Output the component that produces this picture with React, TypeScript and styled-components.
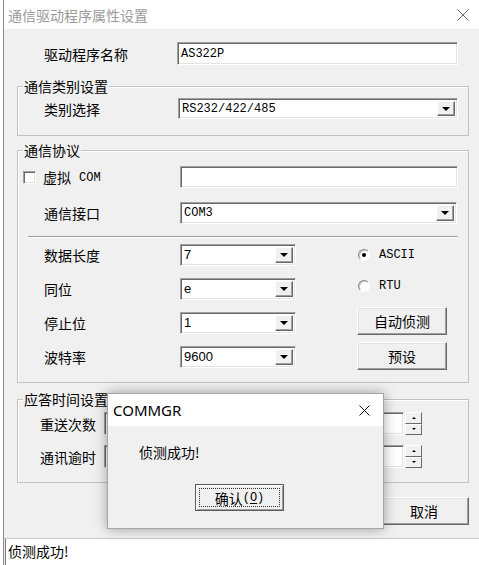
import React from 'react'
import styled, { createGlobalStyle } from 'styled-components'

const GlobalStyle = createGlobalStyle`
  html, body { margin: 0; padding: 0; background: #fff; }
  body {
    font-family: "Noto Sans CJK SC", sans-serif;
    font-size: 14px;
    color: #000;
  }
  * { box-sizing: border-box; }
`

const Window = styled.div`
  position: relative;
  width: 476px;
  height: 565px;
  margin-left: 3px;
  border-left: 1px solid #8c8c8c;
  background: #f0f0f0;
  display: flex;
  flex-direction: column;
  overflow: hidden;
`

const TitleBar = styled.div`
  flex: none;
  height: 29px;
  background: #fff;
  display: flex;
  align-items: center;
  justify-content: space-between;
  padding: 0 10px 0 4px;
  color: #9a9a9a;
  font-size: 14px;
  line-height: 16px;
`

const Body = styled.div`
  display: flex;
  flex-direction: column;
  padding: 0 10px 0 13px;
`

const Row = styled.div<{ $mt?: number; $pl?: number; $h?: number }>`
  display: flex;
  align-items: center;
  height: ${(p) => p.$h ?? 22}px;
  margin-top: ${(p) => p.$mt ?? 0}px;
  padding-left: ${(p) => p.$pl ?? 0}px;
`

const Label = styled.div<{ $w: number }>`
  flex: none;
  width: ${(p) => p.$w}px;
  line-height: 16px;
  white-space: nowrap;
  display: flex;
  align-items: center;
`

const Sunken = styled.div<{ $w: number }>`
  flex: none;
  width: ${(p) => p.$w}px;
  height: 100%;
  display: flex;
  align-items: center;
  background: #fff;
  border: 1px solid;
  border-color: #a0a0a0 #fff #fff #a0a0a0;
  box-shadow: inset 1px 1px 0 #696969, inset -1px -1px 0 #e3e3e3;
`

const Value = styled.span<{ $mono?: boolean }>`
  flex: 1;
  padding-left: 3px;
  white-space: nowrap;
  font-family: ${(p) => (p.$mono ? '"Liberation Mono", monospace' : '"Liberation Sans", Arial, sans-serif')};
  font-size: ${(p) => (p.$mono ? 12 : 13)}px;
  line-height: 16px;
`

const DropBtn = styled.div`
  flex: none;
  width: 18px;
  height: calc(100% - 4px);
  margin-right: 2px;
  display: flex;
  align-items: center;
  justify-content: center;
  background: #f0f0f0;
  border: 1px solid;
  border-color: #fff #696969 #696969 #fff;
  box-shadow: inset -1px -1px 0 #a0a0a0;
`

const Arrow = styled.span<{ $up?: boolean; $size?: number }>`
  width: 0;
  height: 0;
  border-left: ${(p) => p.$size ?? 4}px solid transparent;
  border-right: ${(p) => p.$size ?? 4}px solid transparent;
  ${(p) =>
    p.$up
      ? `border-bottom: ${p.$size ?? 4}px solid #000;`
      : `border-top: ${p.$size ?? 4}px solid #000;`}
`

const Group = styled.div<{ $mt: number; $h: number }>`
  position: relative;
  flex: none;
  margin-top: ${(p) => p.$mt}px;
  height: ${(p) => p.$h}px;
  border: 1px solid #c2c2c2;
  box-shadow: inset 1px 1px 0 #fff;
`

const Legend = styled.span`
  position: absolute;
  top: -9px;
  left: 5px;
  padding: 0 1px;
  background: #f0f0f0;
  line-height: 16px;
`

const CheckBox = styled.span`
  flex: none;
  width: 13px;
  height: 13px;
  margin-right: 7px;
  background: #fff;
  border: 1px solid;
  border-color: #a0a0a0 #fff #fff #a0a0a0;
  box-shadow: inset 1px 1px 0 #696969, inset -1px -1px 0 #e3e3e3;
`

const Mono = styled.span`
  font-family: "Liberation Mono", monospace;
  font-size: 12px;
  line-height: 16px;
  margin: 2px 0 0 8px;
`

const Separator = styled.div`
  margin: 12px 0 0 10px;
  width: 430px;
  height: 2px;
  border-top: 1px solid #a0a0a0;
  border-bottom: 1px solid #fff;
`

const Lower = styled.div`
  display: flex;
  margin-top: 6px;
`

const SelectColumn = styled.div`
  display: flex;
  flex-direction: column;
  gap: 12px;
`

const SideColumn = styled.div`
  display: flex;
  flex-direction: column;
  margin-left: 61px;
`

const RadioRow = styled.div<{ $mt: number }>`
  display: flex;
  align-items: center;
  height: 14px;
  margin-top: ${(p) => p.$mt}px;
  padding-left: 1px;
`

const Radio = styled.span<{ $on?: boolean }>`
  flex: none;
  width: 12px;
  height: 12px;
  margin-right: 9px;
  border-radius: 50%;
  background: #fff;
  border: 1px solid;
  border-color: #8a8a8a #fff #fff #8a8a8a;
  box-shadow: inset 1px 1px 0 #c8c8c8;
  display: flex;
  align-items: center;
  justify-content: center;
  &::after {
    content: '';
    display: ${(p) => (p.$on ? 'block' : 'none')};
    width: 4px;
    height: 4px;
    border-radius: 50%;
    background: #000;
  }
`

const RadioText = styled.span`
  font-family: "Liberation Mono", monospace;
  font-size: 12px;
  line-height: 14px;
`

const Button = styled.div<{ $w?: number; $h?: number; $mt?: number }>`
  flex: none;
  width: ${(p) => p.$w ?? 90}px;
  height: ${(p) => p.$h ?? 28}px;
  margin-top: ${(p) => p.$mt ?? 0}px;
  display: flex;
  align-items: center;
  justify-content: center;
  background: #f0f0f0;
  border: 1px solid;
  border-color: #fff #696969 #696969 #fff;
  box-shadow: inset -1px -1px 0 #a0a0a0, inset 1px 1px 0 #e3e3e3;
  line-height: 16px;
`

const SpinBox = styled.div`
  flex: none;
  width: 17px;
  height: 100%;
  margin-left: 1px;
  display: flex;
  flex-direction: column;
`

const SpinBtn = styled.div`
  flex: 1;
  display: flex;
  align-items: center;
  justify-content: center;
  background: #f0f0f0;
  border: 1px solid;
  border-color: #fff #696969 #696969 #fff;
`

const ButtonBar = styled.div`
  display: flex;
  justify-content: flex-end;
  gap: 5px;
  margin-top: 14px;
`

const StatusBar = styled.div`
  margin-top: auto;
  height: 27px;
  border-top: 1px solid #c8c8c8;
  padding-left: 1px;
  display: flex;
`

const StatusPane = styled.div`
  flex: 1;
  background: #fff;
  border-left: 1px solid #7a7a7a;
  padding-left: 2px;
  line-height: 25px;
`

const Modal = styled.div`
  position: absolute;
  left: 103px;
  top: 393px;
  width: 277px;
  height: 136px;
  background: #f0f0f0;
  border: 1px solid #a6a6a6;
  box-shadow: 0 0 12px rgba(0, 0, 0, 0.35);
  display: flex;
  flex-direction: column;
`

const ModalTitle = styled.div`
  height: 32px;
  flex: none;
  background: #fff;
  display: flex;
  align-items: center;
  justify-content: space-between;
  padding: 0 13px 0 5px;
  font-family: "Noto Sans", "Open Sans", sans-serif;
  font-size: 15px;
`

const ModalBody = styled.div`
  padding: 18px 0 0 31px;
`

const Message = styled.div`
  line-height: 16px;
`

const DefaultButton = styled.div`
  width: 89px;
  height: 27px;
  margin: 24px 0 0 56px;
  padding: 3px;
  display: flex;
  background: #f0f0f0;
  border: 1px solid #5a5a5a;
  box-shadow: inset 1px 1px 0 #fff, inset -1px -1px 0 #a0a0a0;
`

const FocusRing = styled.span`
  flex: 1;
  display: flex;
  align-items: center;
  justify-content: center;
  border: 1px dotted #333;
  line-height: 16px;
`

const Accel = styled.span`
  font-family: "Liberation Mono", monospace;
  font-size: 12px;
  & u { text-underline-offset: 2px; }
`

const CloseIcon = ({ size, color }: { size: number; color: string }) => (
  <svg width={size} height={size} viewBox={`0 0 ${size} ${size}`}>
    <path d={`M0.5 0.5 L${size - 0.5} ${size - 0.5} M${size - 0.5} 0.5 L0.5 ${size - 0.5}`} stroke={color} strokeWidth="1" />
  </svg>
)

const Select = ({ w, value, mono }: { w: number; value: string; mono?: boolean }) => (
  <Sunken $w={w}>
    <Value $mono={mono}>{value}</Value>
    <DropBtn>
      <Arrow />
    </DropBtn>
  </Sunken>
)

const Spinner = () => (
  <>
    <Sunken $w={300} />
    <SpinBox>
      <SpinBtn><Arrow $up $size={2} /></SpinBtn>
      <SpinBtn><Arrow $size={2} /></SpinBtn>
    </SpinBox>
  </>
)

const serialRows = [
  { label: '数据长度', value: '7' },
  { label: '同位', value: 'e' },
  { label: '停止位', value: '1' },
  { label: '波特率', value: '9600' },
]

const App = () => {
  return (
    <>
      <GlobalStyle />
      <Window>
        <TitleBar>
          <span>通信驱动程序属性设置</span>
          <CloseIcon size={12} color="#666" />
        </TitleBar>

        <Body>
          <Row $mt={13} $pl={27} $h={23}>
            <Label $w={133}>驱动程序名称</Label>
            <Sunken $w={281}>
              <Value $mono>AS322P</Value>
            </Sunken>
          </Row>

          <Group $mt={21} $h={50}>
            <Legend>通信类别设置</Legend>
            <Row $mt={11} $pl={26} $h={21}>
              <Label $w={134}>类别选择</Label>
              <Select w={280} value="RS232/422/485" mono />
            </Row>
          </Group>

          <Group $mt={14} $h={233}>
            <Legend>通信协议</Legend>
            <Row $mt={15} $pl={5}>
              <Label $w={157}>
                <CheckBox />
                <span>虚拟</span>
                <Mono>COM</Mono>
              </Label>
              <Sunken $w={278} />
            </Row>
            <Row $mt={14} $pl={26}>
              <Label $w={136}>通信接口</Label>
              <Select w={277} value="COM3" mono />
            </Row>
            <Separator />
            <Lower>
              <SelectColumn>
                {serialRows.map((r) => (
                  <Row key={r.label} $pl={26}>
                    <Label $w={136}>{r.label}</Label>
                    <Select w={116} value={r.value} />
                  </Row>
                ))}
              </SelectColumn>
              <SideColumn>
                <RadioRow $mt={4}>
                  <Radio $on />
                  <RadioText>ASCII</RadioText>
                </RadioRow>
                <RadioRow $mt={17}>
                  <Radio />
                  <RadioText>RTU</RadioText>
                </RadioRow>
                <Button $mt={14}>自动侦测</Button>
                <Button $mt={7}>预设</Button>
              </SideColumn>
            </Lower>
          </Group>

          <Group $mt={16} $h={84}>
            <Legend>应答时间设置</Legend>
            <Row $mt={12} $pl={22} $h={23}>
              <Label $w={64}>重送次数</Label>
              <Spinner />
            </Row>
            <Row $mt={10} $pl={22} $h={23}>
              <Label $w={64}>通讯逾时</Label>
              <Spinner />
            </Row>
          </Group>

          <ButtonBar>
            <Button>确定</Button>
            <Button>取消</Button>
          </ButtonBar>
        </Body>

        <StatusBar>
          <StatusPane>侦测成功!</StatusPane>
        </StatusBar>

        <Modal>
          <ModalTitle>
            <span>COMMGR</span>
            <CloseIcon size={11} color="#111" />
          </ModalTitle>
          <ModalBody>
            <Message>侦测成功!</Message>
            <DefaultButton>
              <FocusRing>
                确认<Accel>(<u>O</u>)</Accel>
              </FocusRing>
            </DefaultButton>
          </ModalBody>
        </Modal>
      </Window>
    </>
  )
}

export default App
